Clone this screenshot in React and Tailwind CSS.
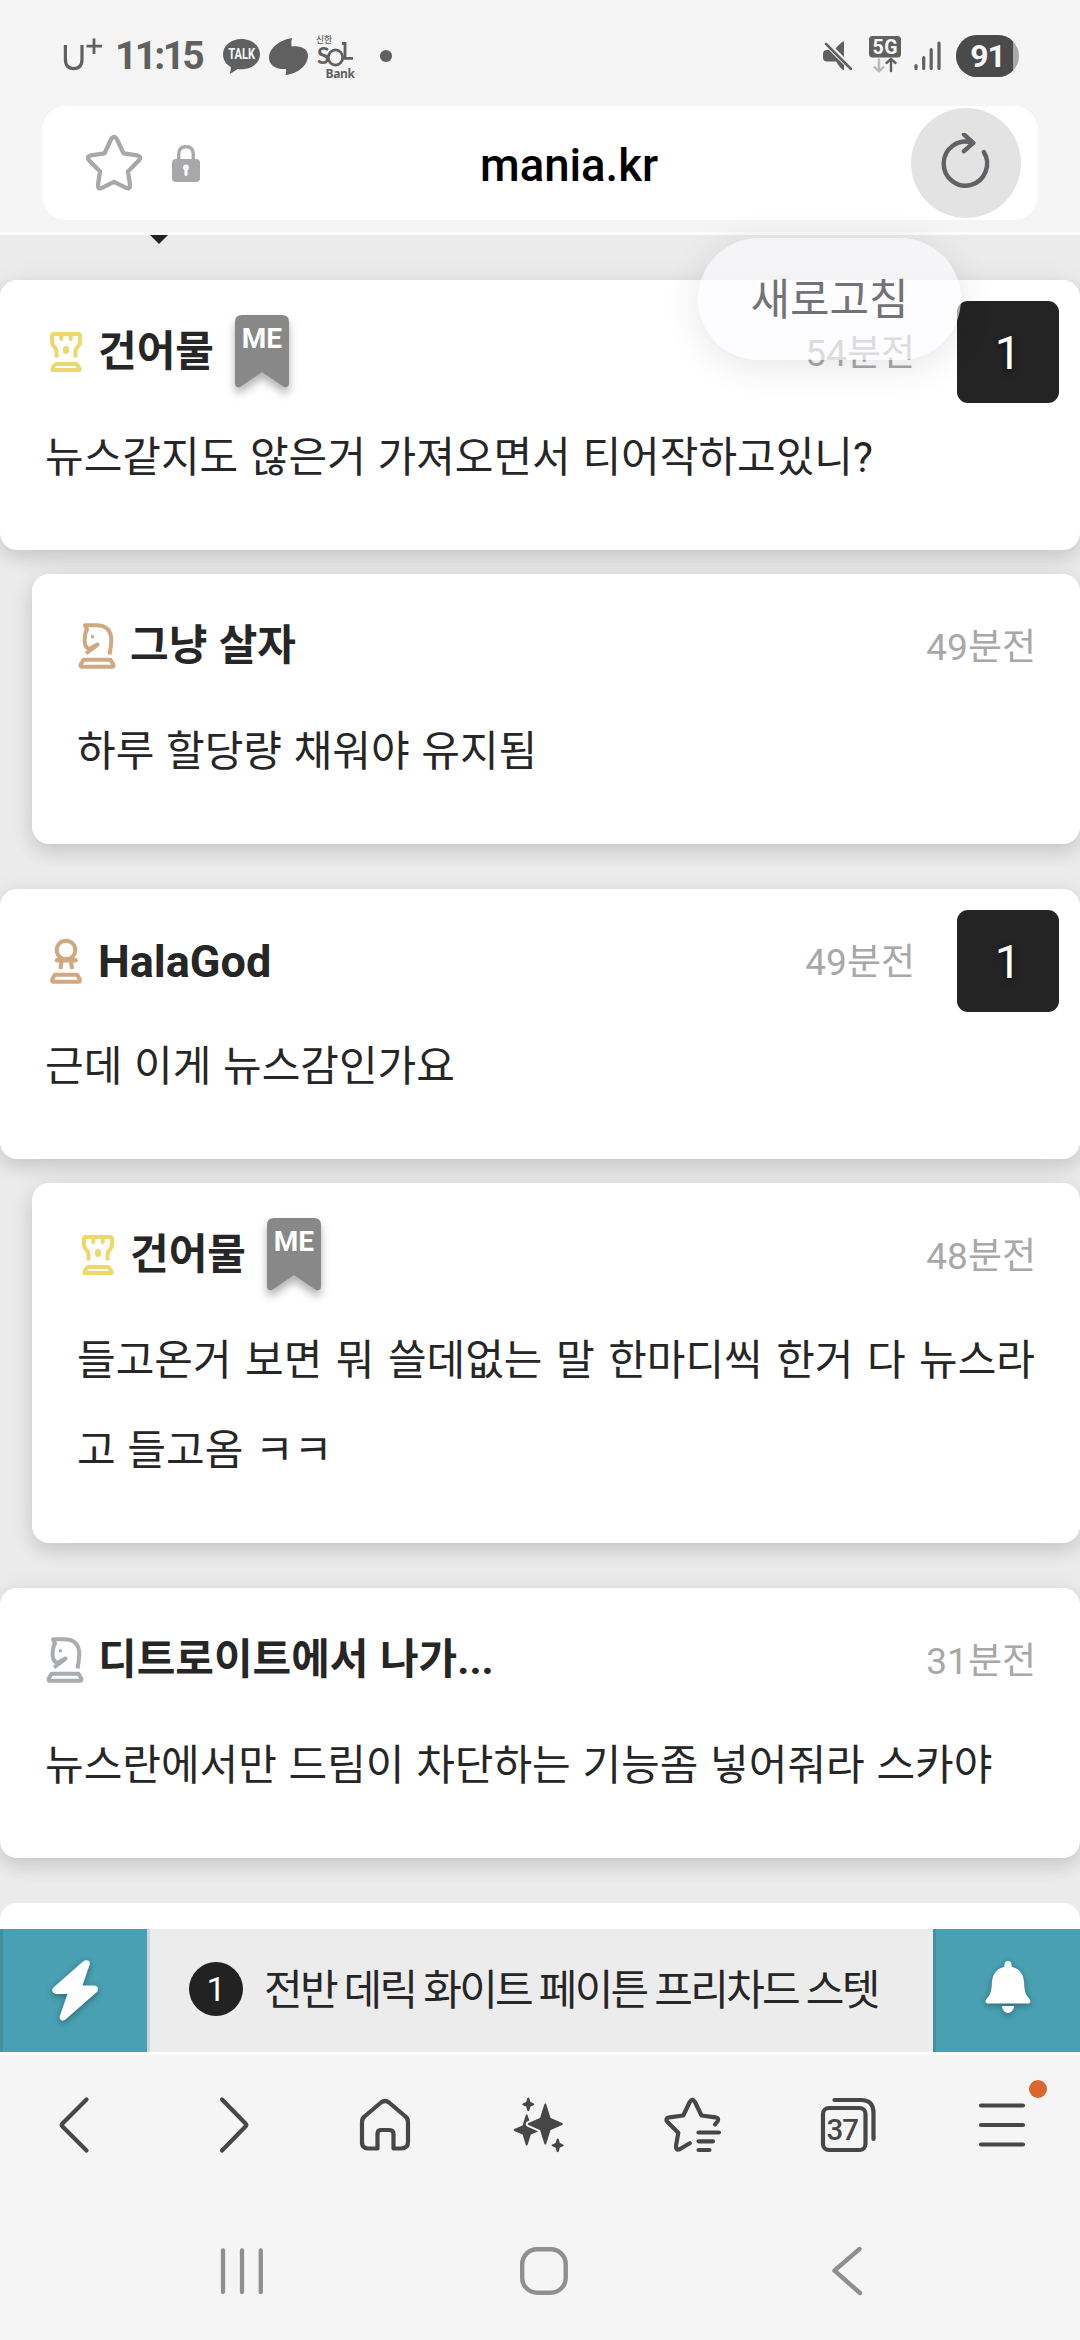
import React from "react";

// Icon whose viewBox is expressed in screen coordinates.
function Icon({ x, y, w, h, className = "", children }) {
  return (
    <svg
      width={w}
      height={h}
      viewBox={`${x} ${y} ${w} ${h}`}
      fill="none"
      strokeLinecap="round"
      strokeLinejoin="round"
      className={`block shrink-0 ${className}`}
    >
      {children}
    </svg>
  );
}

function StatusBar() {
  return (
    <div className="flex h-[106px] shrink-0 items-start justify-between pr-[61px] pl-[60px] text-[#606060]">
      <div className="flex h-[112px] items-center">
        <Icon x={60} y={30} w={46} h={52}>
          <path d="M65.4 45V59C65.4 66 68.5 68.6 73.7 68.6S82 66 82 59V45" stroke="#606060" strokeWidth="3.2" strokeLinecap="butt" />
          <path d="M94 38.5V54M86.5 46.2H102" stroke="#606060" strokeWidth="2.8" strokeLinecap="butt" />
        </Icon>
        <span className="ml-[9px] w-[104px] text-[39px] leading-none font-bold tracking-[-2.7px]">11:15</span>
        <Icon x={219} y={30} w={180} h={52}>
          <path d="M241.500 39C252 39 260 45.800 260 54.300S252 69.300 241.500 69.300Q239.500 69.300 237.600 69L230 74L231 67.200C226 64.500 223 60 223 54.300C223 45.800 231 39 241.500 39Z" fill="#606060" />
          <text x="228.200" y="59.300" textLength="27" lengthAdjust="spacingAndGlyphs" fontFamily="Roboto, sans-serif" fontWeight="700" fontSize="13.800" fill="#f5f5f5">TALK</text>
          <path d="M292 38C279 40 269 48.500 269 58C269 65 276 69.800 286 69Q286.500 72 285.500 75C298.500 73.500 308 65 308 55.500C308 48.500 300.500 45 291.500 46.500Q290.800 42 292 38Z" fill="#606060" />
          <text x="316" y="42.500" fontFamily="'Noto Sans CJK KR', sans-serif" fontWeight="500" fontSize="8.800" fill="#606060">신한</text>
          <text x="317" y="63.500" fontFamily="Lato, sans-serif" fontWeight="700" fontSize="23" fill="#606060">S</text>
          <ellipse cx="335.500" cy="57.500" rx="7.200" ry="7.600" stroke="#606060" strokeWidth="2.800" />
          <path d="M342 43.500H345V58.400H353" stroke="#606060" strokeWidth="2.800" strokeLinecap="butt" strokeLinejoin="miter" />
          <text x="325.500" y="77.800" textLength="29.500" fontFamily="'Open Sans', sans-serif" fontWeight="700" fontSize="12" fill="#606060">Bank</text>
          <circle cx="386" cy="56" r="6.100" fill="#606060" />
        </Icon>
      </div>
      <div className="flex h-[112px] items-center">
        <Icon x={820} y={30} w={136} h={52}>
          <path d="M844 41V57L835.500 48.500Q840 43 844 41Z" fill="#606060" />
          <path d="M823 54Q823 50 827 50H829L844 65V70.500Q841 69.500 836 61.500H827Q823 61.500 823 57.500Z" fill="#606060" />
          <path d="M826 43.800L851 69" stroke="#606060" strokeWidth="2.600" />
          <rect x="869" y="36" width="32" height="21.500" rx="3.500" fill="#606060" />
          <text x="872.500" y="53.500" textLength="25" fontFamily="Roboto, sans-serif" fontWeight="700" fontSize="19.500" fill="#f7f7f7">5G</text>
          <path d="M879 59.500V71M874.500 67L879 71.500L883.500 67" stroke="#b9b9b9" strokeWidth="2.400" />
          <path d="M891 71V59.500M886.500 63L891 58.800L895.500 63" stroke="#606060" strokeWidth="2.400" />
          <path d="M916 65.500V68.500M923.700 57.500V68.500M931.200 49.500V68.500M939 43V68.500" stroke="#606060" strokeWidth="3.200" />
        </Icon>
        <div className="flex h-[42px] w-[63px] overflow-hidden rounded-full bg-[#a9a9a9]">
          <div className="flex h-full w-[57px] items-center justify-center bg-[#4a4a4a] pl-[6px] text-[32px] leading-none font-bold tracking-[-1px] text-[#f7f7f7]">
            91
          </div>
        </div>
      </div>
    </div>
  );
}

function AddressBar() {
  return (
    <div className="flex h-[129px] shrink-0 flex-col border-b-[3px] border-[#fcfcfc]">
      <div className="relative mx-[42px] flex h-[114px] items-center justify-between rounded-[24px] bg-white pr-[17px] pl-[40px]">
        <Icon x={82} y={130} w={124} h={66}>
          <path
            d="M104.500 153.300L111 139.500Q114 134.500 117 139.500L123.500 153.300L137 155.300Q142 156.500 139 160.300L128 171.500L130 184.500Q130.300 189.800 126 187.800L114 181.800L102 187.800Q97.700 189.800 98 184.500L100 171.500L89 160.300Q86 156.500 91 155.300Z"
            stroke="#a8a8a8"
            strokeWidth="4.300"
          />
          <path d="M178.700 161V154.500Q178.700 146.600 186 146.600T193.300 154.500V161" stroke="#a8a8aa" strokeWidth="3.400" />
          <rect x="172" y="159" width="28" height="23" rx="4" fill="#a8a8aa" />
          <path d="M186 168V174.500" stroke="#fff" strokeWidth="3" />
          <circle cx="186" cy="167.500" r="2.900" fill="#fff" />
        </Icon>
        <span className="absolute top-[37px] left-[438px] text-[45.5px] leading-none font-medium text-black">mania.kr</span>
        <div className="flex size-[110px] items-center justify-center rounded-full bg-[#e3e3e3]">
          <Icon x={936} y={133} w={60} h={60}>
            <path d="M983.800 152A21.700 22 0 1 1 972 142.700" stroke="#626266" strokeWidth="4.400" />
            <path d="M964 134.500L973.300 142.800L964 151.200" stroke="#626266" strokeWidth="4.400" />
          </Icon>
        </div>
      </div>
    </div>
  );
}

function Rank({ kind, color }) {
  return (
    <Icon x={44} y={326} w={40} h={50}>
      <g stroke={color} strokeWidth="4">
        {kind === "rook" && (
          <>
            <path d="M56.500 356.500V351Q56.500 347.500 54 345.500Q52 343.500 52 341V335Q52 333 54 333H78Q80 333 80 335V341Q80 343.500 78 345.500Q75.500 347.500 75.500 351V356.500" strokeLinecap="butt" />
            <path d="M61.300 334V338M70.700 334V338" />
            <rect x="64.500" y="346.500" width="3" height="5" rx="1.500" strokeWidth="3" />
            <path d="M56 363H76Q80 366.500 79.500 369H52.500Q52 366.500 56 363Z" />
          </>
        )}
        {kind === "knight" && (
          <>
            <path d="M77.500 359.500Q79 352 79.300 346C79.500 335 74 330.300 64 330.300H53L55 334.500Q52.600 338 52.700 346Q52.500 352 57 354L65.500 349.500L54 358.500" strokeLinecap="butt" />
            <path d="M60 354L65.300 349.700" />
            <circle cx="60.500" cy="341.700" r="1.800" fill={color} stroke="none" />
            <path d="M51.500 364.700H78.500L81.300 369.500Q82 371.800 80 371.800H50Q48 371.800 48.700 369.500Z" />
          </>
        )}
        {kind === "pawn" && (
          <>
            <circle cx="66" cy="340" r="9.300" />
            <path d="M57 350.300H75.500" strokeWidth="4.500" />
            <path d="M61.500 351L60.500 359M71 351L72 359" strokeWidth="4.200" strokeLinecap="butt" />
            <path
              d="M54.800 364.700H77.200L79.800 369.500Q80.300 371.800 78.500 371.800H53.500Q51.700 371.800 52.200 369.500Z"
              strokeWidth="4"
            />
          </>
        )}
      </g>
    </Icon>
  );
}

function MeRibbon() {
  return (
    <div className="relative ml-[20px] h-[74px] w-[56px]">
      <svg width="56" height="74" viewBox="0 0 56 74" className="block overflow-visible drop-shadow-[0_6px_4px_rgba(0,0,0,0.3)]">
        <path d="M1 7Q1 0 8 0H48Q55 0 55 7V69Q54 73 50 72L28 57L6 72Q2 73 1 69Z" fill="#888" />
      </svg>
      <span className="absolute inset-x-0 top-[10px] text-center text-[28px] leading-none font-bold text-white">ME</span>
    </div>
  );
}

const comments = [
  { rank: "rook", color: "#eed86b", name: "건어물", me: true, time: "54분전", score: 1, text: "뉴스같지도 않은거 가져오면서 티어작하고있니?" },
  { rank: "knight", color: "#cfa981", name: "그냥 살자", time: "49분전", reply: true, text: "하루 할당량 채워야 유지됨" },
  { rank: "pawn", color: "#cfa981", name: "HalaGod", latin: true, time: "49분전", score: 1, text: "근데 이게 뉴스감인가요" },
  { rank: "rook", color: "#eed86b", name: "건어물", me: true, time: "48분전", reply: true, text: "들고온거 보면 뭐 쓸데없는 말 한마디씩 한거 다 뉴스라고 들고옴 ㅋㅋ" },
  { rank: "knight", color: "#a9adb1", name: "디트로이트에서 나가...", time: "31분전", text: "뉴스란에서만 드림이 차단하는 기능좀 넣어줘라 스카야" },
];

function Comment({ item }) {
  return (
    <article
      className={`${item.reply ? "mt-[24px] ml-[32px]" : "mt-[45px]"} shrink-0 rounded-[17px] bg-white pb-[47px] shadow-[0_8px_18px_rgba(0,0,0,0.12),0_2px_30px_rgba(0,0,0,0.05)]`}
    >
      <header className="flex h-[123px] items-center pt-[21px] pr-[21px] pl-[44px]">
        <Rank kind={item.rank} color={item.color} />
        <span className={`ml-[14px] leading-none font-bold whitespace-nowrap [word-spacing:1px] ${item.latin ? "text-[45px]" : "text-[42px]"}`}>
          {item.name}
        </span>
        {item.me && <MeRibbon />}
        <span className={`ml-auto pt-[3px] text-[37px] leading-none text-[#a8a8a8] ${item.score ? "mr-[42px]" : "mr-[23px]"}`}>{item.time}</span>
        {item.score && (
          <div className="flex size-[102px] items-center justify-center rounded-[11px] bg-[#242424] text-[47px] leading-none text-white [text-shadow:0_3px_6px_rgba(0,0,0,0.6)]">
            {item.score}
          </div>
        )}
      </header>
      <p className="mt-[10px] px-[45px] text-justify text-[42px] leading-[90px] break-all [word-spacing:1.300px]">{item.text}</p>
    </article>
  );
}

function Ticker() {
  return (
    <div className="flex h-[123px] shrink-0 bg-[#ececec]">
      <div className="flex w-[150px] items-center justify-center border-r-[3px] border-l-[3px] border-r-[#ccd5d8] border-l-[#43919f] bg-[#48a0b2]">
        <Icon x={42} y={1953} w={66} h={81} className="drop-shadow-[0_2px_3px_rgba(0,0,0,0.35)]">
          <path d="M83 1964.500C87 1961.500 91 1964 89.500 1968L82.500 1988.500H94.500C98.500 1989 99.500 1993 96 1995.800L65.500 2022.500C61.500 2025.500 58.500 2022 60 2018.500L67.500 1997H56C52 1996.500 51 1992.500 54 1990Z" fill="#fff" />
        </Icon>
      </div>
      <div className="flex flex-1 items-center pl-[39px]">
        <div className="mb-[3px] flex size-[54px] items-center justify-center rounded-full bg-[#222] text-[34px] leading-none text-white">1</div>
        <span className="ml-[21px] text-[42px] leading-none tracking-[-2.7px] whitespace-nowrap">전반 데릭 화이트 페이튼 프리차드 스텟</span>
      </div>
      <div className="flex w-[147px] items-center justify-center border-l-[3px] border-[#43919f] bg-[#48a0b2] pb-[8px]">
        <Icon x={978} y={1953} w={60} h={68} className="drop-shadow-[0_2px_3px_rgba(0,0,0,0.35)]">
          <path d="M1008 1961Q1011.500 1961 1011.500 1965V1966.500Q1023 1970 1024 1981C1024.500 1991 1025 1994 1029 1998.500C1032 2002 1030 2003.500 1027 2003.500H989C986 2003.500 984 2002 987 1998.500C991 1994 991.500 1991 992 1981Q993 1970 1004.500 1966.500V1965Q1004.500 1961 1008 1961Z M1001.800 2006H1014.200Q1013 2013 1008 2013T1001.800 2006Z" fill="#fff" />
        </Icon>
      </div>
    </div>
  );
}

function Sparkle({ cx, cy, rx, ry, halo }) {
  const k = 0.27;
  const d = `M${cx} ${cy - ry}L${cx + rx * k} ${cy - ry * k}L${cx + rx} ${cy}L${cx + rx * k} ${cy + ry * k}L${cx} ${cy + ry}L${cx - rx * k} ${cy + ry * k}L${cx - rx} ${cy}L${cx - rx * k} ${cy - ry * k}Z`;
  return (
    <>
      {halo && <path d={d} fill="#f5f5f5" stroke="#f5f5f5" strokeWidth="6" />}
      <path d={d} fill="#474747" stroke="#474747" strokeWidth="2" />
    </>
  );
}

function Toolbar() {
  return (
    <nav className="grid h-[137px] shrink-0 grid-cols-7 place-items-center" aria-label="browser">
      <Icon x={37} y={2083} w={80} h={80}>
        <path d="M86.500 2098.500L62.500 2122.500Q61 2124 62.500 2125.500L86.500 2149.500" stroke="#474747" strokeWidth="4.200" />
      </Icon>
      <Icon x={191} y={2083} w={80} h={80}>
        <path d="M222 2098.500L245.500 2122.500Q247 2124 245.500 2125.500L222 2149.500" stroke="#474747" strokeWidth="4.200" />
      </Icon>
      <Icon x={346} y={2083} w={80} h={80}>
        <path d="M362 2143V2121Q362 2117.500 364.500 2115.500L381 2101.500Q385 2098.500 389 2101.500L405.500 2115.500Q408 2117.500 408 2121V2141Q408 2147.500 401 2147.500H393.500V2133Q393.500 2129 389.500 2129H380.500Q377.500 2129 377.500 2133V2147.500H368Q362 2147.500 362 2141Z" stroke="#474747" strokeWidth="4.200" />
      </Icon>
      <Icon x={500} y={2083} w={80} h={80}>
        <Sparkle cx={526.7} cy={2129} rx={12} ry={14.5} />
        <Sparkle cx={545.3} cy={2123} rx={16.5} ry={19.5} halo />
        <Sparkle cx={528.3} cy={2103.3} rx={5} ry={5.8} />
        <Sparkle cx={557.7} cy={2144.3} rx={5} ry={5.8} />
      </Icon>
      <Icon x={654} y={2083} w={80} h={80}>
        <path d="M715 2123.500L717.500 2120.500Q719.500 2117 715.500 2116.300L701.500 2114.500L695 2101Q692.300 2096.500 689.700 2101L683.300 2114.500L669.500 2116.300Q664.500 2117.300 667.500 2121L678.300 2131.700L676 2145Q675.800 2150 680 2148L689.800 2142.300" stroke="#474747" strokeWidth="4.200" />
        <path d="M698.500 2131.500H719M698.500 2140.300H713M698.500 2149H709.500" stroke="#474747" strokeWidth="4.200" />
      </Icon>
      <Icon x={808} y={2083} w={80} h={80}>
        <rect x="822" y="2107" width="42.500" height="42" rx="6" stroke="#474747" strokeWidth="4.200" />
        <path d="M833.500 2099H860Q872.500 2099 872.500 2112V2138" stroke="#474747" strokeWidth="4.200" />
        <text x="825.500" y="2138.800" textLength="32.500" fontFamily="Roboto, sans-serif" fontWeight="500" fontSize="29.500" fill="#474747">37</text>
      </Icon>
      <Icon x={958} y={2073} w={90} h={100}>
        <path d="M981 2104.500H1023M981 2124H1023M981 2143.500H1023" stroke="#474747" strokeWidth="4.200" />
        <circle cx="1038" cy="2088" r="9" fill="#d9672f" />
      </Icon>
    </nav>
  );
}

function SystemNav() {
  return (
    <nav className="flex h-[148px] shrink-0 items-start justify-between pt-[49px] pr-[203px] pl-[211px]" aria-label="system">
      <Icon x={211} y={2241} w={64} h={60}>
        <path d="M223 2250.500V2292M242 2250.500V2292M260.800 2250.500V2292" stroke="#8f8f8f" strokeWidth="4.300" />
      </Icon>
      <Icon x={508} y={2241} w={72} h={60}>
        <rect x="522.200" y="2249.200" width="43.500" height="43.500" rx="15" stroke="#8f8f8f" strokeWidth="4.400" />
      </Icon>
      <Icon x={813} y={2241} w={64} h={60}>
        <path d="M859.500 2249L834.500 2270.700L860 2293" stroke="#8f8f8f" strokeWidth="4.400" />
      </Icon>
    </nav>
  );
}

export default function App() {
  return (
    <div
      className="relative flex h-[2340px] w-[1080px] flex-col overflow-hidden bg-[#f5f5f5] text-[#262626]"
      style={{ fontFamily: "Roboto, 'Noto Sans CJK KR', sans-serif" }}
    >
      <StatusBar />
      <AddressBar />
      <main className="relative flex h-[1694px] shrink-0 flex-col overflow-hidden bg-[#ebebeb]">
        <div className="absolute top-0 left-[150px] h-[9px] w-[18px] bg-[#222] [clip-path:polygon(0_0,100%_0,50%_100%)]" />
        {comments.map((item, i) => (
          <Comment key={i} item={item} />
        ))}
        <div className="mt-[45px] h-[60px] shrink-0 rounded-t-[17px] bg-white" />
      </main>
      <Ticker />
      <div className="h-[3px] shrink-0 bg-[#fcfcfc]" />
      <Toolbar />
      <SystemNav />
      <div className="absolute top-[238px] left-[698px] flex h-[122px] w-[263px] items-center justify-center rounded-full bg-[rgba(252,252,255,0.62)] pt-[2px] text-[43px] leading-none text-[#737375] shadow-[0_6px_36px_rgba(0,0,0,0.10)]">
        새로고침
      </div>
    </div>
  );
}
